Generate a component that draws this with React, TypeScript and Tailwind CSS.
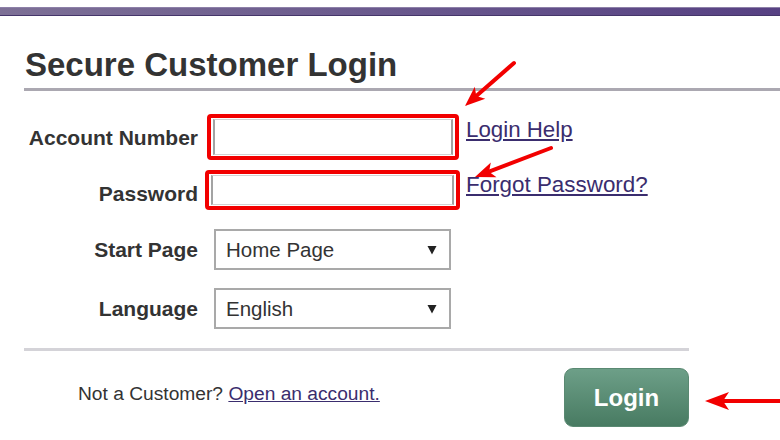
import React from "react";

function Arrow({
  x1,
  y1,
  x2,
  y2,
  len,
  half,
  w,
}: {
  x1: number;
  y1: number;
  x2: number;
  y2: number;
  len: number;
  half: number;
  w: number;
}) {
  const dx = x2 - x1;
  const dy = y2 - y1;
  const L = Math.hypot(dx, dy);
  const ux = dx / L;
  const uy = dy / L;
  const bx = x2 - ux * len;
  const by = y2 - uy * len;
  const px = -uy;
  const py = ux;
  const nx = x2 - ux * len * 0.75;
  const ny = y2 - uy * len * 0.75;
  const pts = `${x2},${y2} ${bx + px * half},${by + py * half} ${nx},${ny} ${bx - px * half},${by - py * half}`;
  return (
    <g>
      <line x1={x1} y1={y1} x2={nx} y2={ny} stroke="#f20000" strokeWidth={w} strokeLinecap="round" />
      <polygon points={pts} fill="#f20000" />
    </g>
  );
}

function FakeSelect({ value }: { value: string }) {
  return (
    <div className="ml-[16px] w-[237px] h-[41px] border-2 border-[#a9a9a9] bg-white flex items-center pl-[10px] pr-[12px]">
      <span className="mt-[2px] text-[20.5px] text-[#333] leading-none">{value}</span>
      <svg className="ml-auto" width="10" height="10" viewBox="0 0 10 10">
        <polygon points="0.5,1 9.5,1 5,9.5" fill="#222" />
      </svg>
    </div>
  );
}

export default function App() {
  return (
    <div className="relative w-[780px] h-[440px] overflow-hidden bg-white font-['Liberation_Sans',Arial,sans-serif] text-[#333]">
      <div className="mt-[7px] h-[9px] bg-linear-to-r from-[#7d7096] to-[#574183] border-t border-t-[#8d80a8] border-b border-b-[#45356a]" />
      <h1 className="mt-[32px] ml-[25px] text-[33px] leading-[33px] font-bold text-[#333]">
        Secure Customer Login
      </h1>
      <div className="mt-[7px] ml-[24px] h-[3px] bg-[#aba8b1]" />

      {/* Account number */}
      <div className="mt-[23px] flex items-center">
        <label className="w-[198px] text-right text-[21px] font-bold leading-none">Account Number</label>
        <div className="ml-[9px] w-[252px] h-[46px] border-[4px] border-[#f20000] rounded-[4px] px-[2px] py-[1px]">
          <input
            type="text"
            className="block w-full h-full bg-white border-x-2 border-x-[#a3a3a3] border-y border-y-[#d2d2d2] outline-none"
          />
        </div>
        <a className="ml-[7px] mb-[14px] text-[22.3px] leading-none underline text-[#3a2d6e]">Login Help</a>
      </div>

      {/* Password */}
      <div className="mt-[10px] flex items-center">
        <label className="w-[198px] mt-[6px] text-right text-[21px] font-bold leading-none">Password</label>
        <div className="ml-[7px] w-[255px] h-[40px] border-[4px] border-[#f20000] rounded-[4px] px-[2px] py-[1px]">
          <input
            type="password"
            className="block w-full h-full bg-white border-x-2 border-x-[#a3a3a3] border-y border-y-[#d2d2d2] outline-none"
          />
        </div>
        <a className="ml-[6px] mb-[9px] text-[22.4px] leading-none underline text-[#3a2d6e]">Forgot Password?</a>
      </div>

      {/* Start page */}
      <div className="mt-[19px] flex items-center">
        <label className="w-[198px] text-right text-[21px] font-bold leading-none">Start Page</label>
        <FakeSelect value="Home Page" />
      </div>

      {/* Language */}
      <div className="mt-[18px] flex items-center">
        <label className="w-[198px] text-right text-[21px] font-bold leading-none">Language</label>
        <FakeSelect value="English" />
      </div>

      <div className="mt-[19px] ml-[24px] w-[665px] h-[3px] bg-[#d4d3d8]" />

      <div className="mt-[17px] w-[689px] flex items-center pl-[78px]">
        <p className="mb-[7px] text-[19.2px] leading-none text-[#333]">
          Not a Customer? <a className="underline text-[#3a2d6e]">Open an account.</a>
        </p>
        <button className="ml-auto w-[125px] h-[59px] rounded-[9px] bg-linear-to-b from-[#6d9f88] to-[#487b62] border border-[#5a8972] text-white font-bold text-[24px] leading-none">
          Login
        </button>
      </div>

      <svg
        className="absolute left-0 top-0 pointer-events-none"
        width="780"
        height="440"
        viewBox="0 0 780 440"
      >
        <Arrow x1={514} y1={63} x2={465} y2={106} len={20} half={8} w={4} />
        <Arrow x1={551} y1={148} x2={475} y2={177} len={20} half={8} w={4} />
        <Arrow x1={784} y1={401} x2={705} y2={401} len={24} half={9} w={4} />
      </svg>
    </div>
  );
}
